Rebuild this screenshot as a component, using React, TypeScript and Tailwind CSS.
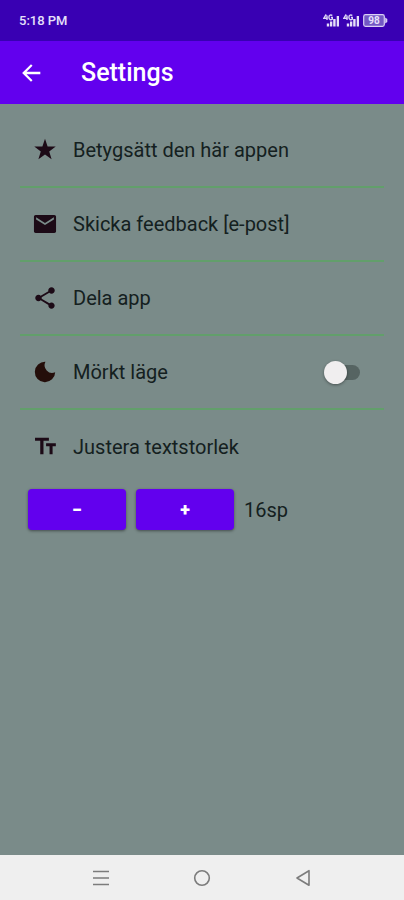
import { useState } from 'react';
import type { ReactNode } from 'react';
import clsx from 'clsx';

interface IconProps {
  path: string;
  className?: string;
}

function Icon({ path, className }: IconProps) {
  return (
    <svg viewBox="0 0 24 24" fill="currentColor" aria-hidden="true" className={clsx("shrink-0", className)}>
      <path d={path} />
    </svg>
  );
}

const icons = {
  back: "M20.6 10.8H7.9l5.5-5.4L12 3.9 3.8 12l8.2 8.1 1.4-1.5-5.5-5.4h12.7z",
  star: "M12 1.5l2.4 7.3h7.5l-6 4.5 2.2 7.2-6.1-4.4-6.1 4.4 2.2-7.2-6-4.5h7.5z",
  mail: "M20.6 3.6H3.4C2.5 3.6 1.8 4.3 1.8 5.2v13.6c0 .9.7 1.6 1.6 1.6h17.2c.9 0 1.6-.7 1.6-1.6V5.2c0-.9-.7-1.6-1.6-1.6zM20.2 7.8L12 13 3.8 7.8V5.8l8.2 5.2 8.2-5.2z",
  share: "M18 16.08c-.76 0-1.44.3-1.96.77L8.91 12.7c.05-.23.09-.46.09-.7s-.04-.47-.09-.7l7.05-4.11c.54.5 1.25.81 2.04.81 1.66 0 3-1.34 3-3s-1.34-3-3-3-3 1.34-3 3c0 .24.04.47.09.7L8.04 9.81C7.5 9.31 6.79 9 6 9c-1.66 0-3 1.34-3 3s1.34 3 3 3c.79 0 1.5-.31 2.04-.81l7.12 4.16c-.05.21-.08.43-.08.65 0 1.61 1.31 2.92 2.92 2.92s2.92-1.31 2.92-2.92-1.31-2.92-2.92-2.92z",
  moon: "M12.4 2.6A9.4 9.4 0 1 0 21.4 12.2A7 7 0 0 1 12.4 2.6z",
  textSize: "M2.8 3.4v2.8h4.8v12.6h3V6.2h5V3.4zM13 8.6v2.6h3.2v7.6h2.8v-7.6h3V8.6z",
};

interface RowProps {
  icon: string;
  iconColor?: string;
  label: ReactNode;
  children?: ReactNode;
  last?: boolean;
}

function Row({ icon, iconColor = "text-[#1c0a16]", label, children, last }: RowProps) {
  return (
    <li className={clsx("flex h-[74px] items-center gap-[15px] pl-3", !last && "border-b-2 border-[#629f6b]")}>
      <Icon path={icon} className={clsx("size-[26px]", iconColor)} />
      {label}
      {children}
    </li>
  );
}

function Signal() {
  return (
    <svg viewBox="0 0 17 13" className="h-[13px] w-[17px]" aria-hidden="true">
      <g fill="none" stroke="#dcd5f5" strokeWidth="1.4">
        <path d="M3.2 0.5L0.8 4.2H4.8M4 1.5V6M9.3 1.6C8 .3 5.9 1 5.9 3.3s2 3 3.4 1.9V3.5H7.9" />
      </g>
      <g fill="#e4def8">
        <path d="M3.8 9.6h2.4v2.9H3.8zM7 7.5h2.3v5H7zM10.2 5h2.4v7.5h-2.4zM13.7 2H16v10.5h-2.3z" />
      </g>
    </svg>
  );
}

function Battery() {
  return (
    <div className="relative flex items-center" aria-label="98%">
      <svg viewBox="0 0 25 13" className="h-[13px] w-[25px]" aria-hidden="true">
        <rect x=".7" y=".7" width="20.6" height="11.6" rx="1.8" fill="#7257c4" stroke="#d9d0f5" strokeWidth="1.2" />
        <path d="M22.2 3.6l2.1 1.4v3L22.2 9.4z" fill="#d9d0f5" />
      </svg>
      <span className="absolute inset-y-0 left-0 w-[22px] text-center text-[10px] leading-[13px] font-bold">98</span>
    </div>
  );
}

const sizeButton =
  "h-[41px] w-[98px] rounded-[4px] bg-[#6200ee] text-lg font-black text-white shadow-[0_1px_3px_rgba(0,0,0,0.45)]";

export default function App() {
  const [dark, setDark] = useState(false);
  const [size, setSize] = useState(16);

  return (
    <div className="flex min-h-screen flex-col bg-[#7a8b89] font-['Roboto',sans-serif] text-[#142020]">
      <div className="flex h-[41px] items-center justify-between bg-[#3900b3] pr-4 pl-[19px] text-[#e6e0fa]">
        <span className="text-[13px] font-medium">5:18 PM</span>
        <div className="flex items-center gap-[3px]">
          <Signal />
          <Signal />
          <Battery />
        </div>
      </div>

      <header className="flex h-[63px] items-center bg-[#6200ee] pl-[18px] text-white">
        <button type="button" aria-label="Back" className="mr-[37px]">
          <Icon path={icons.back} className="size-[26px]" />
        </button>
        <h1 className="text-[25px] font-medium">Settings</h1>
      </header>

      <main className="flex-1 pt-2.5">
        <ul className="mx-5 text-xl">
          <Row icon={icons.star} label={<a href="#rate">Betygsätt den här appen</a>} />
          <Row icon={icons.mail} label={<a href="#feedback">Skicka feedback [e-post]</a>} />
          <Row icon={icons.share} label={<a href="#share">Dela app</a>} />
          <Row icon={icons.moon} iconColor="text-[#240e0a]" label={<label htmlFor="dark-mode">Mörkt läge</label>}>
            <input
              id="dark-mode"
              type="checkbox"
              role="switch"
              checked={dark}
              onChange={(e) => setDark(e.target.checked)}
              className="relative mr-6 ml-auto h-[15px] w-8 appearance-none rounded-full bg-[#566462] before:absolute before:-top-1 before:-left-1 before:size-[23px] before:rounded-full before:bg-[#f0eeef] before:shadow-[0_1px_3px_rgba(0,0,0,0.4)] checked:before:left-3"
            />
          </Row>
          <Row icon={icons.textSize} label="Justera textstorlek" last />
        </ul>

        <div className="ml-7 flex items-center gap-2.5 pt-[5px]">
          <button type="button" aria-label="Minska" className={sizeButton} onClick={() => setSize(size - 1)}>
            −
          </button>
          <button type="button" aria-label="Öka" className={sizeButton} onClick={() => setSize(size + 1)}>
            +
          </button>
          <output className="text-xl">{size}sp</output>
        </div>
      </main>

      <nav className="h-[45px] bg-[#efefef] text-[#7c7c7c]">
        <div className="mx-auto grid h-full w-3/4 grid-cols-3 place-items-center">
          <button type="button" aria-label="Recent apps">
            <svg viewBox="0 0 18 18" className="size-[18px]" fill="none" stroke="currentColor" strokeWidth="1.6">
              <path d="M1 2.5h16M1 9h16M1 15.5h16" />
            </svg>
          </button>
          <button type="button" aria-label="Home">
            <svg viewBox="0 0 18 18" className="size-[18px]" fill="none" stroke="currentColor" strokeWidth="1.6">
              <circle cx="9" cy="9" r="7.3" />
            </svg>
          </button>
          <button type="button" aria-label="Back">
            <svg viewBox="0 0 18 18" className="size-[18px]" fill="none" stroke="currentColor" strokeWidth="1.6" strokeLinejoin="round">
              <path d="M15 1.7v14.6L3 9z" />
            </svg>
          </button>
        </div>
      </nav>
    </div>
  );
}
